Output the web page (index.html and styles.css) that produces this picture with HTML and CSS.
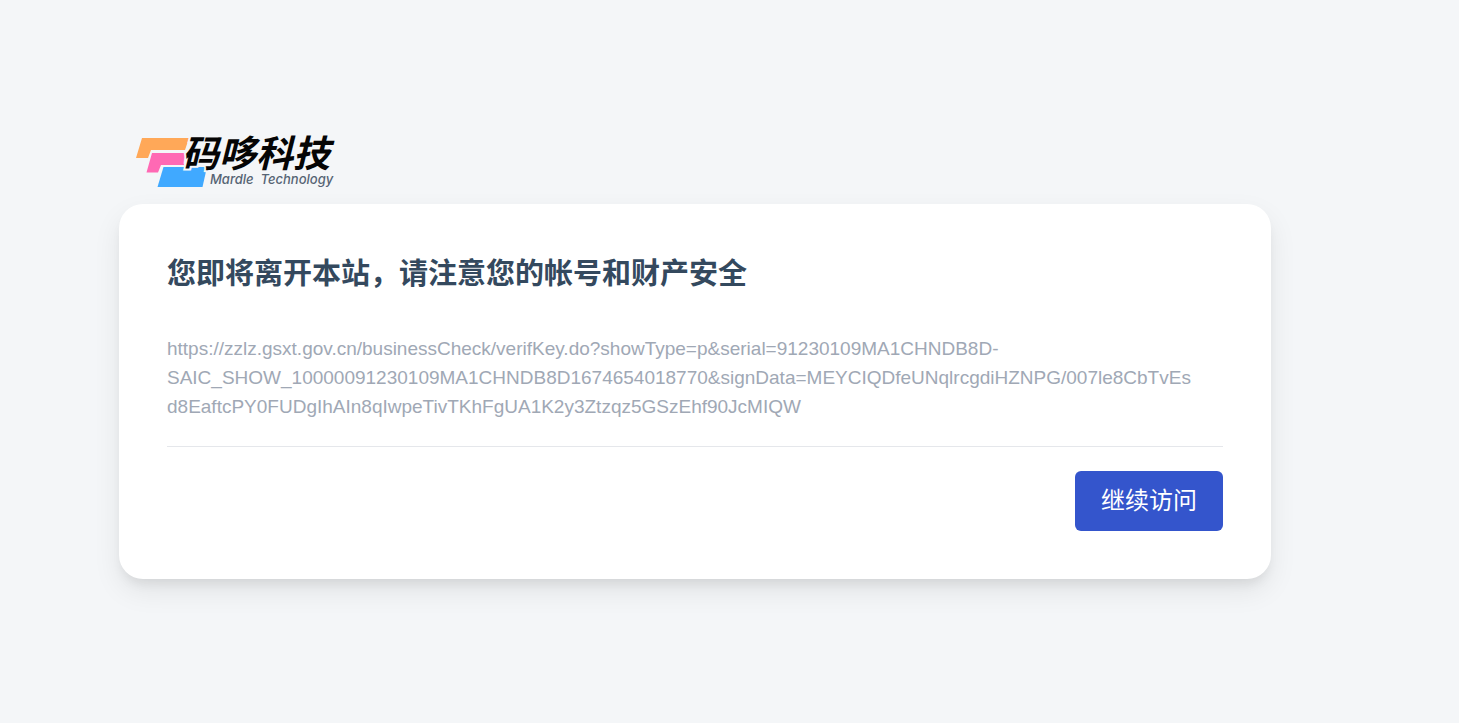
FILE: index.html
```html
<!DOCTYPE html>
<html lang="zh-CN">
<head>
<meta charset="utf-8">
<meta name="viewport" content="width=device-width, initial-scale=1">
<title>码哆科技</title>
<link rel="stylesheet" href="styles.css">
</head>
<body>
<main class="page">
  <svg class="logo" viewBox="0 0 208 60" role="img" aria-label="码哆科技 Mardle Technology">
    <path fill="#ffa858" d="M6 7H53L49 19H15L12 27H0Z"/>
    <path fill="#ff69b4" d="M16 22H50L48 34H25L22 41.500H10.500Z"/>
    <path fill="#40a9ff" d="M27.500 36H71L66.500 56H21.500Z"/>
    <text class="logo-name" x="46" y="36">码哆科技</text>
    <text class="logo-sub" x="74" y="53">Mardle&#160; Technology</text>
  </svg>
  <section class="card">
    <h1 class="title">您即将离开本站，请注意您的帐号和财产安全</h1>
    <p class="url">https://zzlz.gsxt.gov.cn/businessCheck/verifKey.do?showType=p&amp;serial=91230109MA1CHNDB8D-<br>SAIC_SHOW_10000091230109MA1CHNDB8D1674654018770&amp;signData=MEYCIQDfeUNqlrcgdiHZNPG/007le8CbTvEs<br>d8EaftcPY0FUDgIhAIn8qIwpeTivTKhFgUA1K2y3Ztzqz5GSzEhf90JcMIQW</p>
    <div class="actions">
      <button class="go" type="button">继续访问</button>
    </div>
  </section>
</main>
</body>
</html>
```
FILE: styles.css
```css
* { box-sizing: border-box; }
body {
  margin: 0;
  min-height: 100vh;
  background: #f4f6f8;
  font-family: "Liberation Sans", "Noto Sans CJK SC", sans-serif;
}
.page {
  display: flex;
  flex-direction: column;
  max-width: 1459px;
  padding: 131px 188px 48px 119px;
}
.logo {
  width: 208px;
  height: 60px;
  margin: 0 0 13px 17px;
  overflow: visible;
}
.logo-name {
  font: italic 700 37px "Noto Sans CJK SC", sans-serif;
  fill: #050505;
  stroke: #f4f6f8;
  stroke-width: 4px;
  paint-order: stroke;
}
.logo-sub {
  font: italic 500 13px Inter, sans-serif;
  fill: #566474;
}
.card {
  padding: 48px;
  background: #fff;
  border-radius: 24px;
  box-shadow: 0 12px 28px rgba(0, 0, 0, 0.08), 0 8px 12px -4px rgba(0, 0, 0, 0.08);
}
.title {
  margin: 0 0 38px;
  color: #34495e;
  font-size: 29px;
  line-height: 44px;
  font-weight: 700;
}
.url {
  margin: 0;
  padding-bottom: 25px;
  border-bottom: 1px solid #e5e7eb;
  color: #a0a8b5;
  font-size: 19px;
  line-height: 29px;
  overflow-wrap: anywhere;
}
.actions {
  display: flex;
  justify-content: flex-end;
  padding-top: 24px;
}
.go {
  padding: 12px 26px;
  border: 0;
  border-radius: 6px;
  background: #3455cc;
  color: #fff;
  font: 24px/36px "Liberation Sans", "Noto Sans CJK SC", sans-serif;
  cursor: pointer;
}
```
